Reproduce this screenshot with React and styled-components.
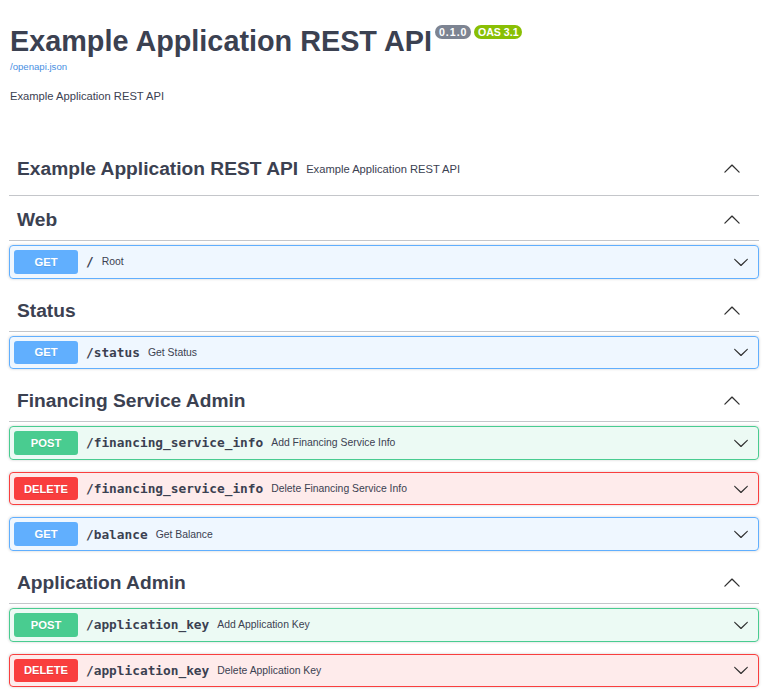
import React from 'react';
import styled, { createGlobalStyle } from 'styled-components';

const METHODS = {
  get: { main: '#61affe', bg: 'rgba(97, 175, 254, 0.1)' },
  post: { main: '#49cc90', bg: 'rgba(73, 204, 144, 0.1)' },
  delete: { main: '#f93e3e', bg: 'rgba(249, 62, 62, 0.1)' }
};

const tags = [
  { name: 'Example Application REST API', description: 'Example Application REST API', ops: [] },
  { name: 'Web', ops: [{ method: 'get', path: '/', summary: 'Root' }] },
  { name: 'Status', ops: [{ method: 'get', path: '/status', summary: 'Get Status' }] },
  {
    name: 'Financing Service Admin',
    ops: [
      { method: 'post', path: '/financing_service_info', summary: 'Add Financing Service Info' },
      { method: 'delete', path: '/financing_service_info', summary: 'Delete Financing Service Info' },
      { method: 'get', path: '/balance', summary: 'Get Balance' }
    ]
  },
  {
    name: 'Application Admin',
    ops: [
      { method: 'post', path: '/application_key', summary: 'Add Application Key' },
      { method: 'delete', path: '/application_key', summary: 'Delete Application Key' }
    ]
  }
];

const Arrow = ({ up, size }) => (
  <ArrowSvg
    width={size}
    height={size}
    viewBox="0 0 20 20"
    style={up ? { transform: 'rotate(180deg)' } : undefined}
  >
    <path d="M17.418 6.109c.272-.268.709-.268.979 0s.271.701 0 .969l-7.908 7.83c-.27.268-.707.268-.979 0l-7.908-7.83c-.27-.268-.27-.701 0-.969.271-.268.709-.268.979 0L10 13.25l7.418-7.141z" />
  </ArrowSvg>
);

const App = () => {
  return (
    <>
      <GlobalStyle />
      <Wrapper>
        <Info>
          <TitleRow>
            <Title>Example Application REST API</Title>
            <Badges>
              <Badge $color="#7d8492" $wide>0.1.0</Badge>
              <Badge $color="#89bf04">OAS 3.1</Badge>
            </Badges>
          </TitleRow>
          <SpecLink href="#">/openapi.json</SpecLink>
          <InfoText>Example Application REST API</InfoText>
        </Info>

        {tags.map((tag) => (
          <TagSection key={tag.name}>
            <TagHeading>
              <span>{tag.name}</span>
              {tag.description && <TagDescription>{tag.description}</TagDescription>}
              <TagToggle>
                <Arrow up size={18} />
              </TagToggle>
            </TagHeading>
            {tag.ops.map((op) => (
              <Opblock key={op.method + op.path} $method={op.method}>
                <Method $method={op.method}>{op.method.toUpperCase()}</Method>
                <Path>{op.path}</Path>
                <Summary>{op.summary}</Summary>
                <OpToggle>
                  <Arrow size={16} />
                </OpToggle>
              </Opblock>
            ))}
          </TagSection>
        ))}
      </Wrapper>
    </>
  );
};

const GlobalStyle = createGlobalStyle`
  html {
    scrollbar-width: none;
  }
  body {
    margin: 0;
    background: #fff;
    font-family: 'Liberation Sans', Arial, sans-serif;
    color: #3b4151;
  }
`;

const Wrapper = styled.div`
  padding: 0 9px;
`;

const Info = styled.div`
  padding-top: 23px;
  margin-bottom: 40px;
`;

const TitleRow = styled.div`
  display: flex;
  align-items: flex-start;
`;

const Title = styled.h2`
  margin: 0;
  padding-left: 1px;
  font-size: 28.8px;
  line-height: 36px;
  font-weight: 700;
  color: #3b4151;
`;

const Badges = styled.div`
  display: flex;
  gap: 3px;
  margin: 2px 0 0 3px;
`;

const Badge = styled.span`
  display: inline-block;
  padding: 1.5px ${(p) => (p.$wide ? '4px' : '3.5px')};
  border-radius: 57px;
  background: ${(p) => p.$color};
  color: #fff;
  font-size: 10.6px;
  line-height: 11px;
  font-weight: 700;
  letter-spacing: ${(p) => (p.$wide ? '1px' : '0')};
`;

const SpecLink = styled.a`
  display: block;
  margin-top: 2px;
  padding-left: 1px;
  font-size: 9.6px;
  line-height: 12px;
  color: #4990e2;
  text-decoration: none;
`;

const InfoText = styled.p`
  margin: 16px 0 0;
  padding-left: 1px;
  font-size: 11.2px;
  line-height: 14px;
  color: #3b4151;
`;

const TagSection = styled.section`
  display: flex;
  flex-direction: column;
`;

const TagHeading = styled.h3`
  display: flex;
  align-items: center;
  margin: 0 0 4px;
  padding: 8px 16px 8px 8px;
  border-bottom: 1px solid rgba(59, 65, 81, 0.3);
  font-size: 19.2px;
  line-height: 24px;
  font-weight: 700;
  color: #3b4151;
`;

const TagDescription = styled.small`
  flex: 1;
  margin: 11px 0;
  padding: 0 8px;
  font-size: 11.2px;
  line-height: 14px;
  font-weight: 400;
`;

const TagToggle = styled.span`
  display: flex;
  margin: 0 2px 0 auto;
`;

const ArrowSvg = styled.svg`
  fill: #303030;
`;

const Opblock = styled.div`
  display: flex;
  align-items: center;
  margin-bottom: 12px;
  padding: 4px;
  border: 1px solid ${(p) => METHODS[p.$method].main};
  border-radius: 4px;
  background: ${(p) => METHODS[p.$method].bg};
  box-shadow: 0 0 3px rgba(0, 0, 0, 0.19);
`;

const Method = styled.span`
  flex: none;
  width: 64px;
  padding: 4.8px 0;
  border-radius: 3px;
  background: ${(p) => METHODS[p.$method].main};
  color: #fff;
  font-size: 11.2px;
  line-height: 14px;
  font-weight: 700;
  text-align: center;
  text-shadow: 0 1px 0 rgba(0, 0, 0, 0.1);
`;

const Path = styled.span`
  padding: 0 8px;
  font-family: 'DejaVu Sans Mono', 'Liberation Mono', monospace;
  font-size: 12.8px;
  font-weight: 700;
  color: #3b4151;
`;

const Summary = styled.span`
  flex: 1;
  font-size: 10.4px;
  color: #3b4151;
`;

const OpToggle = styled.span`
  display: flex;
  margin-right: 5px;
`;

export default App;
